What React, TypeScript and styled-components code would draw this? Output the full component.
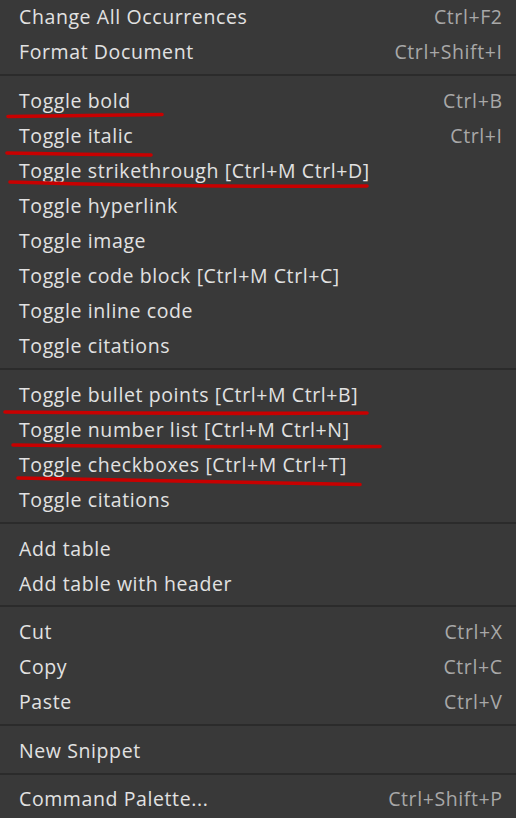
import styled, { createGlobalStyle } from "styled-components";

const GlobalStyle = createGlobalStyle`
  html, body {
    margin: 0;
    padding: 0;
    background: #393939;
  }

  body {
    width: 516px;
    height: 818px;
    overflow: hidden;
    font-family: "Open Sans", "Noto Sans", sans-serif;
  }
`;

type MenuEntry = {
  label: string;
  shortcut?: string;
};

const SECTIONS: MenuEntry[][] = [
  [
    { label: "Change All Occurrences", shortcut: "Ctrl+F2" },
    { label: "Format Document", shortcut: "Ctrl+Shift+I" },
  ],
  [
    { label: "Toggle bold", shortcut: "Ctrl+B" },
    { label: "Toggle italic", shortcut: "Ctrl+I" },
    { label: "Toggle strikethrough [Ctrl+M Ctrl+D]" },
    { label: "Toggle hyperlink" },
    { label: "Toggle image" },
    { label: "Toggle code block [Ctrl+M Ctrl+C]" },
    { label: "Toggle inline code" },
    { label: "Toggle citations" },
  ],
  [
    { label: "Toggle bullet points [Ctrl+M Ctrl+B]" },
    { label: "Toggle number list [Ctrl+M Ctrl+N]" },
    { label: "Toggle checkboxes [Ctrl+M Ctrl+T]" },
    { label: "Toggle citations" },
  ],
  [{ label: "Add table" }, { label: "Add table with header" }],
  [
    { label: "Cut", shortcut: "Ctrl+X" },
    { label: "Copy", shortcut: "Ctrl+C" },
    { label: "Paste", shortcut: "Ctrl+V" },
  ],
  [{ label: "New Snippet" }],
  [{ label: "Command Palette...", shortcut: "Ctrl+Shift+P" }],
];

// hand-drawn red marks over the menu, in page coordinates
const MARKS = [
  "M8 116.5 Q85 115.5 162 114.5",
  "M7 153 Q80 154.5 151 155",
  "M10 182 Q190 187.5 367 186",
  "M5 412 Q185 414 367 413",
  "M13 445 Q200 447.5 380 446.5",
  "M18 478 Q190 482 360 484.5",
];

const Page = styled.div({
  position: "relative",
  width: "516px",
  height: "818px",
  overflow: "hidden",
});

const Menu = styled.div({
  display: "flex",
  flexDirection: "column",
  marginTop: "-2px",
});

const Item = styled.div({
  display: "flex",
  alignItems: "center",
  justifyContent: "space-between",
  height: "35.1px",
  padding: "2px 14px 0 19px",
  boxSizing: "border-box",
  fontSize: "19.5px",
  letterSpacing: "0.6px",
  whiteSpace: "nowrap",
});

const Label = styled.span({
  color: "#e2e2e2",
});

const Shortcut = styled.span({
  color: "#a8a8a8",
  marginRight: "-0.6px",
});

const Separator = styled.div({
  height: "13.4px",
  display: "flex",
  alignItems: "center",

  "&::after": {
    content: '""',
    display: "block",
    width: "100%",
    height: "2px",
    backgroundColor: "#2b2b2b",
  },
});

const Marks = styled.svg({
  position: "absolute",
  top: 0,
  left: 0,
  pointerEvents: "none",
});

const App = () => {
  return (
    <>
      <GlobalStyle />
      <Page>
        <Menu>
          {SECTIONS.map((section, sectionIndex) => (
            <div key={sectionIndex}>
              {sectionIndex > 0 && <Separator />}
              {section.map((entry, index) => (
                <Item key={index}>
                  <Label>{entry.label}</Label>
                  {entry.shortcut && <Shortcut>{entry.shortcut}</Shortcut>}
                </Item>
              ))}
            </div>
          ))}
        </Menu>
        <Marks width="516" height="818" viewBox="0 0 516 818">
          {MARKS.map((d, index) => (
            <path
              key={index}
              d={d}
              fill="none"
              stroke="#c80000"
              strokeWidth="3.6"
              strokeLinecap="round"
            />
          ))}
        </Marks>
      </Page>
    </>
  );
};

export default App;
